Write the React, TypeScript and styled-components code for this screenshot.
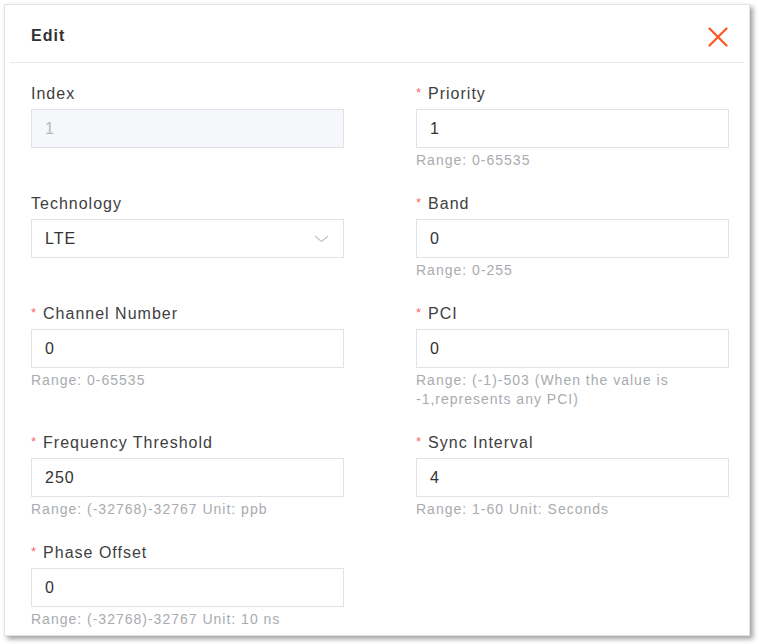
import styled, { createGlobalStyle } from "styled-components";

const GlobalStyle = createGlobalStyle`
  body {
    margin: 0;
    background: #ffffff;
    font-family: "Liberation Sans", Arial, sans-serif;
  }
`;

const Page = styled.div`
  padding: 4px 9px 8px 4px;
`;

const Modal = styled.div`
  width: 746px;
  height: 632px;
  box-sizing: border-box;
  background: #fff;
  border: 1px solid #e2e2e2;
  box-shadow: 3px 3px 5px rgba(0, 0, 0, 0.38);
  display: flex;
  flex-direction: column;
  overflow: hidden;
`;

const Header = styled.div`
  flex: 0 0 57px;
  display: flex;
  align-items: center;
  justify-content: space-between;
  border-bottom: 1px solid #e8eaee;
  margin: 0 5px;
  padding: 0 16px 0 21px;
`;

const Title = styled.div`
  font-size: 16px;
  font-weight: bold;
  letter-spacing: 1px;
  color: #303133;
  padding-top: 4px;
`;

const CloseButton = styled.button`
  border: none;
  background: none;
  padding: 0;
  width: 20px;
  height: 20px;
  margin-top: 6px;
  cursor: pointer;
  display: flex;
`;

const Body = styled.div`
  flex: 0 0 auto;
  padding: 21px 20px 6px 26px;
  display: grid;
  grid-template-columns: 313px 313px;
  column-gap: 72px;
  row-gap: 24px;
  align-items: start;
`;

const Field = styled.div`
  display: flex;
  flex-direction: column;
`;

const Label = styled.div`
  height: 20px;
  font-size: 16px;
  line-height: 20px;
  letter-spacing: 1px;
  color: #404040;
  margin-bottom: 5px;
  white-space: nowrap;
`;

const Star = styled.span`
  position: relative;
  top: -2px;
  color: #f56c6c;
  font-size: 13px;
  margin-right: 6px;
`;

const InputBox = styled.div<{ $disabled?: boolean }>`
  height: 39px;
  box-sizing: border-box;
  border: 1px solid #dfe2e8;
  background: ${(p) => (p.$disabled ? "#f5f7fa" : "#fff")};
  color: ${(p) => (p.$disabled ? "#b4b7bd" : "#333")};
  font-size: 16px;
  letter-spacing: 1px;
  padding: 0 14px 0 13px;
  display: flex;
  align-items: center;
  justify-content: space-between;
`;

const Help = styled.div`
  font-size: 14px;
  line-height: 19px;
  letter-spacing: 1px;
  color: #a9abaf;
  padding-top: 3px;
`;

const Chevron = () => (
  <svg width="15" height="8" viewBox="0 0 15 8">
    <path d="M1 1 L7.5 6.5 L14 1" fill="none" stroke="#c0c4cc" strokeWidth="1.2" />
  </svg>
);

type FieldDef = {
  label: string;
  value: string;
  required?: boolean;
  disabled?: boolean;
  select?: boolean;
  help?: string;
};

const fields: FieldDef[] = [
  { label: "Index", value: "1", disabled: true },
  { label: "Priority", value: "1", required: true, help: "Range: 0-65535" },
  { label: "Technology", value: "LTE", select: true },
  { label: "Band", value: "0", required: true, help: "Range: 0-255" },
  { label: "Channel Number", value: "0", required: true, help: "Range: 0-65535" },
  {
    label: "PCI",
    value: "0",
    required: true,
    help: "Range: (-1)-503 (When the value is -1,represents any PCI)",
  },
  {
    label: "Frequency Threshold",
    value: "250",
    required: true,
    help: "Range: (-32768)-32767 Unit: ppb",
  },
  { label: "Sync Interval", value: "4", required: true, help: "Range: 1-60 Unit: Seconds" },
  {
    label: "Phase Offset",
    value: "0",
    required: true,
    help: "Range: (-32768)-32767 Unit: 10 ns",
  },
];

export default function App() {
  return (
    <Page>
      <GlobalStyle />
      <Modal>
        <Header>
          <Title>Edit</Title>
          <CloseButton aria-label="close">
            <svg width="20" height="20" viewBox="0 0 20 20">
              <path
                d="M1.5 1.5 L18.5 18.5 M18.5 1.5 L1.5 18.5"
                stroke="#ff5520"
                strokeWidth="2.2"
                strokeLinecap="round"
              />
            </svg>
          </CloseButton>
        </Header>
        <Body>
          {fields.map((f) => (
            <Field key={f.label}>
              <Label>
                {f.required && <Star>*</Star>}
                {f.label}
              </Label>
              <InputBox $disabled={f.disabled}>
                <span>{f.value}</span>
                {f.select && <Chevron />}
              </InputBox>
              {f.help && <Help>{f.help}</Help>}
            </Field>
          ))}
        </Body>
      </Modal>
    </Page>
  );
}
